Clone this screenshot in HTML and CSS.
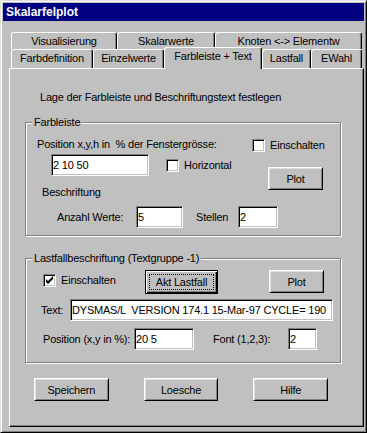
FILE: index.html
```html
<!DOCTYPE html>
<html lang="de">
<head>
    <meta charset="UTF-8">
    <meta name="viewport" content="width=device-width, initial-scale=1.0">
    <title>Skalarfelplot</title>
    <link rel="stylesheet" href="styles.css">
</head>
<body>
    <div class="window">
        <div class="titlebar">Skalarfelplot</div>

        <!-- Karteireiter, zwei Reihen -->
        <div class="tabs">
            <div class="tab-row back">
                <div class="tab" style="width: 106px">Visualisierung</div>
                <div class="tab" style="width: 98px">Skalarwerte</div>
                <div class="tab" style="width: 147px">Knoten &lt;-&gt; Elementw</div>
            </div>
            <div class="tab-row front">
                <div class="tab" style="width: 82px">Farbdefinition</div>
                <div class="tab" style="width: 71px">Einzelwerte</div>
                <div class="tab active" style="width: 98px">Farbleiste + Text</div>
                <div class="tab" style="width: 49px">Lastfall</div>
                <div class="tab" style="width: 51px">EWahl</div>
            </div>
        </div>

        <div class="panel">
            <p class="hint">Lage der Farbleiste und Beschriftungstext festlegen</p>

            <div class="group group-farb">
                <span class="group-title">Farbleiste</span>
                <div class="farb-top">
                    <div class="farb-left">
                        <div class="pos-label">Position x,y,h in&nbsp; % der Fenstergrösse:</div>
                        <div class="row pos-row">
                            <input class="field" type="text" value="2 10 50" style="width: 98px">
                            <label class="check"><span class="box"></span>Horizontal</label>
                        </div>
                        <div class="sub-label">Beschriftung</div>
                    </div>
                    <div class="farb-right">
                        <label class="check"><span class="box"></span>Einschalten</label>
                        <button class="btn plot">Plot</button>
                    </div>
                </div>
                <div class="row anzahl-row">
                    <span class="lbl" style="width: 79px">Anzahl Werte:</span>
                    <input class="field" type="text" value="5" style="width: 47px">
                    <span class="lbl stellen" style="width: 42px">Stellen</span>
                    <input class="field" type="text" value="2" style="width: 40px">
                </div>
            </div>

            <div class="group group-last">
                <span class="group-title">Lastfallbeschriftung (Textgruppe -1)</span>
                <div class="row last-row">
                    <label class="check checked"><span class="box">
                        <svg width="9" height="9" viewBox="0 0 9 9"><path d="M1 3 V6 L3 8 L8 3 V0 L3 5 Z" fill="#000"/></svg>
                    </span>Einschalten</label>
                    <button class="btn default"><span class="focus">Akt Lastfall</span></button>
                    <button class="btn plot">Plot</button>
                </div>
                <div class="row text-row">
                    <span class="lbl" style="width: 29px">Text:</span>
                    <input class="field" type="text" value="DYSMAS/L  VERSION 174.1 15-Mar-97 CYCLE= 190" style="width: 263px">
                </div>
                <div class="row posi-row">
                    <span class="lbl" style="width: 91px">Position (x,y in %):</span>
                    <input class="field" type="text" value="20 5" style="width: 60px">
                    <span class="lbl font-lbl" style="width: 75px">Font (1,2,3):</span>
                    <input class="field" type="text" value="2" style="width: 29px">
                </div>
            </div>

            <div class="actions">
                <button class="btn action">Speichern</button>
                <button class="btn action">Loesche</button>
                <button class="btn action">Hilfe</button>
            </div>
        </div>
    </div>
</body>
</html>
```

FILE: styles.css
```css
* {
    box-sizing: border-box;
}

body {
    margin: 0;
    background-color: #c0c0c0;
    font-family: "Liberation Sans", Arial, sans-serif;
    font-size: 11px;
    letter-spacing: -0.2px;
    color: #000;
}

.window {
    width: 367px;
    height: 433px;
    padding: 2px;
    background-color: #c0c0c0;
    border: 1px solid;
    border-color: #dfdfdf #000 #000 #dfdfdf;
    box-shadow: inset 1px 1px #fff, inset -1px -1px #808080;
}

.titlebar {
    height: 18px;
    line-height: 18px;
    padding-left: 3px;
    background-color: #000080;
    color: #fff;
    font-weight: bold;
    font-size: 12px;
    letter-spacing: 0;
}

/* Karteireiter */
.tabs {
    margin-top: 11px;
    padding-left: 8px;
}

.tab-row {
    display: flex;
}

.tab-row.back {
    height: 17px;
}

.tab-row.front {
    height: 19px;
}

.tab {
    height: 100%;
    padding-top: 2px;
    text-align: center;
    line-height: 13px;
    white-space: nowrap;
    background-color: #c0c0c0;
    border: 1px solid;
    border-bottom: none;
    border-color: #fff #000 #000 #fff;
    border-radius: 3px 3px 0 0;
    box-shadow: inset -1px 0 #808080;
}

.tab.active {
    position: relative;
    z-index: 1;
    height: 22px;
    margin-top: -2px;
}

.panel {
    position: relative;
    width: 355px;
    height: 359px;
    margin-left: 6px;
    padding-left: 15px;
    border: 1px solid;
    border-color: #fff #000 #000 #fff;
    box-shadow: inset -1px -1px #808080;
}

.hint {
    margin: 22px 0 0 15px;
    line-height: 13px;
}

/* Gruppenrahmen */
.group {
    position: relative;
    width: 316px;
    border: 1px solid #808080;
    box-shadow: inset 1px 1px #fff, 1px 1px #fff;
}

.group-title {
    position: absolute;
    top: -7px;
    left: 6px;
    padding: 0 2px;
    line-height: 13px;
    background-color: #c0c0c0;
}

.group-farb {
    height: 114px;
    margin-top: 18px;
}

.group-last {
    height: 105px;
    margin-top: 22px;
}

.row {
    display: flex;
    align-items: center;
}

.lbl {
    line-height: 13px;
    white-space: nowrap;
}

.farb-top {
    display: flex;
    align-items: flex-start;
}

.farb-left {
    width: 226px;
}

.pos-label {
    margin: 15px 0 0 11px;
    line-height: 13px;
    white-space: nowrap;
}

.pos-row {
    margin: 3px 0 0 25px;
}

.pos-row .check {
    margin-left: 17px;
}

.sub-label {
    margin: 10px 0 0 16px;
    line-height: 13px;
}

.farb-right {
    display: flex;
    flex-direction: column;
    align-items: flex-start;
}

.farb-right .check {
    margin-top: 16px;
}

.farb-right .plot {
    margin: 15px 0 0 16px;
}

.anzahl-row {
    margin: 7px 0 0 31px;
}

.stellen {
    margin-left: 13px;
}

.last-row {
    align-items: flex-start;
    margin: 11px 0 0 17px;
}

.last-row .check {
    width: 102px;
    margin-top: 4px;
}

.last-row .plot {
    margin-left: 51px;
}

.text-row {
    margin: 5px 0 0 15px;
}

.posi-row {
    margin: 7px 0 0 17px;
}

.font-lbl {
    margin-left: 19px;
}

/* Eingabefelder */
.field {
    height: 22px;
    margin: 0;
    padding: 0 1px;
    font: inherit;
    letter-spacing: inherit;
    color: #000;
    background-color: #fff;
    border: 1px solid;
    border-color: #808080 #fff #fff #808080;
    box-shadow: inset 1px 1px #000, inset -1px -1px #c0c0c0;
    outline: none;
}

/* Kontrollkästchen */
.check {
    display: flex;
    align-items: center;
    line-height: 13px;
    white-space: nowrap;
}

.box {
    display: flex;
    align-items: center;
    justify-content: center;
    width: 13px;
    height: 13px;
    margin-right: 5px;
    background-color: #fff;
    border: 1px solid;
    border-color: #808080 #fff #fff #808080;
    box-shadow: inset 1px 1px #000, inset -1px -1px #c0c0c0;
}

.box svg {
    display: block;
}

/* Schaltflächen */
.btn {
    display: flex;
    align-items: center;
    justify-content: center;
    height: 23px;
    padding: 0;
    font: inherit;
    letter-spacing: inherit;
    color: #000;
    background-color: #c0c0c0;
    border: 1px solid;
    border-color: #fff #000 #000 #fff;
    box-shadow: inset 1px 1px #dfdfdf, inset -1px -1px #808080;
}

.btn.plot {
    width: 55px;
}

.btn.default {
    width: 73px;
    height: 24px;
    padding: 3px;
    border-color: #000;
    box-shadow: inset 1px 1px #fff, inset -1px -1px #000, inset -2px -2px #808080;
}

.focus {
    display: flex;
    align-items: center;
    justify-content: center;
    width: 100%;
    height: 100%;
    border: 1px dotted #000;
}

.actions {
    display: flex;
    margin: 15px 0 0 9px;
}

.btn.action {
    width: 76px;
    margin-right: 35px;
}
```
